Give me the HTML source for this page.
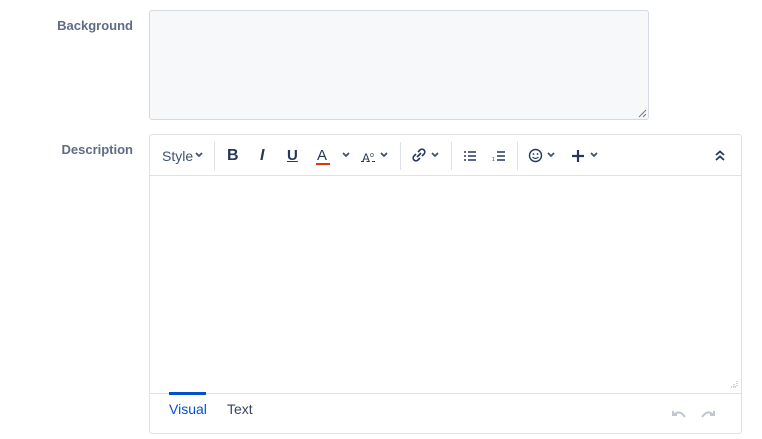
<html><head><style>
body{margin:0;width:762px;height:439px;background:#fff;font-family:"Liberation Sans",sans-serif;position:relative;overflow:hidden}
.lbl{position:absolute;right:629px;font-size:13px;color:#5e6c84;font-weight:bold}
.ta{position:absolute;left:149px;top:10px;width:498px;height:108px;background:#f7f8fa;border:1px solid #d5d9e0;border-radius:3px}
.ed{position:absolute;left:149px;top:134px;width:591px;height:298px;border:1px solid #dfe1e6;border-radius:3px}
.tb{position:absolute;left:0;top:0;right:0;height:40px;border-bottom:1px solid #dfe1e6}
.i{position:absolute;top:0;height:40px;line-height:42px;color:#42526e;font-size:14px}
.sep{position:absolute;top:7px;width:1px;height:28px;background:#dfe1e6}
svg{position:absolute}
</style></head><body>
<div class="lbl" style="top:18px">Background</div>
<div class="ta"><svg style="right:1px;bottom:1px" width="9" height="9"><path d="M8 1L1 8M8 5L5 8" stroke="#777" stroke-width="1"/></svg></div>
<div class="lbl" style="top:142px">Description</div>
<div class="ed">
<div class="tb">
<div class="i" style="left:12px;font-size:14px">Style</div>
<svg style="left:45px;top:17px" width="8" height="6"><path d="M1 1l3 3 3-3" stroke="#42526e" stroke-width="1.8" fill="none"/></svg>
<div class="sep" style="left:64px"></div>
<div class="i" style="left:77px;font-weight:bold;font-size:16px;color:#253858">B</div>
<div class="i" style="left:110px;font-style:italic;font-weight:bold;font-size:16px;color:#253858">I</div>
<div class="i" style="left:137px;text-decoration:underline;font-weight:bold;font-size:15px;color:#253858">U</div>
<div class="i" style="left:167px;font-size:15px;color:#253858">A</div>
<div style="position:absolute;left:166px;top:28px;width:14px;height:2px;background:#de350b"></div>
<svg style="left:192px;top:17px" width="8" height="6"><path d="M1 1l3 3 3-3" stroke="#42526e" stroke-width="1.8" fill="none"/></svg>
<div class="i" style="left:212px;font-size:12px;color:#253858">A<sup style="font-size:7px">o</sup></div>
<div style="position:absolute;left:211px;top:26px;width:14px;height:1px;border-top:1px dashed #253858"></div>
<svg style="left:230px;top:17px" width="8" height="6"><path d="M1 1l3 3 3-3" stroke="#42526e" stroke-width="1.8" fill="none"/></svg>
<div class="sep" style="left:250px"></div>
<svg style="left:261px;top:13px" width="16" height="14"><path d="M6 9l4-4M7 4l2-2a2.5 2.5 0 0 1 4 4l-2 2M9 10l-2 2a2.5 2.5 0 0 1-4-4l2-2" stroke="#253858" stroke-width="1.6" fill="none"/></svg>
<svg style="left:281px;top:17px" width="8" height="6"><path d="M1 1l3 3 3-3" stroke="#42526e" stroke-width="1.8" fill="none"/></svg>
<div class="sep" style="left:301px"></div>
<svg style="left:313px;top:15px" width="14" height="11"><path d="M1 2h2M5 2h8M1 6h2M5 6h8M1 10h2M5 10h8" stroke="#253858" stroke-width="1.6"/></svg>
<svg style="left:342px;top:14px" width="14" height="13"><path d="M5 3h8M5 7h8M5 11h8" stroke="#253858" stroke-width="1.6"/><text x="0" y="12" font-size="5" fill="#253858">1</text></svg>
<div class="sep" style="left:367px"></div>
<svg style="left:378px;top:13px" width="15" height="15"><circle cx="7.5" cy="7.5" r="6" stroke="#253858" stroke-width="1.4" fill="none"/><circle cx="5.5" cy="6" r=".9" fill="#253858"/><circle cx="9.5" cy="6" r=".9" fill="#253858"/><path d="M4.5 9q3 3 6 0" stroke="#253858" stroke-width="1.2" fill="none"/></svg>
<svg style="left:397px;top:17px" width="8" height="6"><path d="M1 1l3 3 3-3" stroke="#42526e" stroke-width="1.8" fill="none"/></svg>
<svg style="left:421px;top:14px" width="14" height="14"><path d="M7 1v12M1 7h12" stroke="#253858" stroke-width="2.2"/></svg>
<svg style="left:440px;top:17px" width="8" height="6"><path d="M1 1l3 3 3-3" stroke="#42526e" stroke-width="1.8" fill="none"/></svg>
<svg style="left:565px;top:15px" width="10" height="11"><path d="M1 5l4-3.5 4 3.5M1 10l4-3.5 4 3.5" stroke="#253858" stroke-width="1.8" fill="none"/></svg>
</div>
<svg style="right:3px;top:245px" width="8" height="8"><path d="M7 1v6M4 4v3M1 7h6" stroke="#aaa" stroke-width="1" stroke-dasharray="1 1"/></svg>
<div style="position:absolute;left:0;right:0;top:258px;border-top:1px solid #dfe1e6"></div>
<div style="position:absolute;left:19px;top:257px;width:37px;height:3px;background:#0052cc"></div>
<div style="position:absolute;left:19px;top:266px;font-size:14px;color:#0052cc">Visual</div>
<div style="position:absolute;left:77px;top:266px;font-size:14px;color:#344563">Text</div>
<svg style="left:521px;top:273px" width="16" height="10"><path d="M3 7q5-6 11 2M2 3v4h4" stroke="#c1c7d0" stroke-width="2" fill="none"/></svg>
<svg style="left:550px;top:273px" width="16" height="10"><path d="M13 7q-5-6-11 2M14 3v4h-4" stroke="#c1c7d0" stroke-width="2" fill="none"/></svg>
</div>
</body></html>
